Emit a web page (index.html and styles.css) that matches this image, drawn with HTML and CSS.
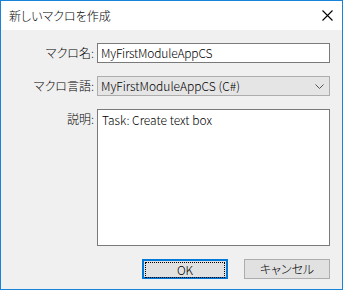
FILE: index.html
```html
<!DOCTYPE html>
<html lang="ja">
<head>
    <meta charset="UTF-8">
    <title>新しいマクロを作成</title>
    <link rel="stylesheet" href="styles.css">
</head>
<body>
    <div class="dialog">
        <div class="titlebar">
            <span class="title">新しいマクロを作成</span>
            <svg class="close" width="11" height="11" viewBox="0 0 11 11">
                <path d="M0.5 0.5 L10.5 10.5 M10.5 0.5 L0.5 10.5" stroke="#000" stroke-width="1.1" fill="none"/>
            </svg>
        </div>

        <div class="content">
            <div class="form">
                <label class="label mid">マクロ名:</label>
                <div class="textbox">MyFirstModuleAppCS</div>

                <label class="label mid">マクロ言語:</label>
                <div class="combo">
                    <span>MyFirstModuleAppCS (C#)</span>
                    <svg class="chevron" width="9" height="5" viewBox="0 0 9 5">
                        <path d="M0.5 0.5 L4.5 4.5 L8.5 0.5" stroke="#555" stroke-width="1" fill="none"/>
                    </svg>
                </div>

                <label class="label top">説明:</label>
                <div class="memo">Task: Create text box</div>
            </div>

            <div class="buttons">
                <button class="btn default"><span class="focus">OK</span></button>
                <button class="btn">キャンセル</button>
            </div>
        </div>
    </div>
</body>
</html>
```

FILE: styles.css
```css
body {
    margin: 0;
    font-family: "Noto Sans CJK JP", "Noto Sans", sans-serif;
    font-size: 12px;
    font-weight: 300;
    font-feature-settings: "palt";
    color: #000;
}

.dialog {
    width: 343px;
    height: 290px;
    box-sizing: border-box;
    border: 1px solid #1883d7;
    background: #f0f0f0;
    display: flex;
    flex-direction: column;
}

.titlebar {
    height: 29px;
    background: #fff;
    display: flex;
    align-items: center;
    justify-content: space-between;
    padding: 0 9px 0 8px;
}

.title {
    font-size: 12px;
}

.content {
    padding: 13px 12px 0 0;
}

.form {
    display: grid;
    grid-template-columns: 93px 233px;
    column-gap: 3px;
    row-gap: 13px;
}

.label {
    text-align: right;
    white-space: nowrap;
    line-height: 16px;
}

.label.mid {
    align-self: center;
}

.label.top {
    padding-top: 2px;
}

.textbox {
    height: 20px;
    box-sizing: border-box;
    border: 1px solid #7a7a7a;
    background: #fff;
    padding: 0 3px;
    line-height: 18px;
    letter-spacing: -0.2px;
}

.combo {
    height: 20px;
    box-sizing: border-box;
    border: 1px solid #adadad;
    background: #e5e5e5;
    padding: 0 4px 0 3px;
    line-height: 18px;
    display: flex;
    align-items: center;
    justify-content: space-between;
}

.chevron {
    margin-right: 1px;
}

.memo {
    height: 137px;
    box-sizing: border-box;
    border: 1px solid #7a7a7a;
    background: #fff;
    padding: 2px 4px;
    line-height: 16px;
}

.buttons {
    display: flex;
    justify-content: flex-end;
    gap: 16px;
    margin-top: 13px;
}

.btn {
    width: 86px;
    height: 20px;
    box-sizing: border-box;
    border: 1px solid #adadad;
    background: #e1e1e1;
    font-family: inherit;
    font-size: 12px;
    font-weight: 300;
    font-feature-settings: "palt";
    color: #000;
    padding: 0;
    line-height: 16px;
}

.btn.default {
    border: 2px solid #0078d7;
    padding: 1px;
}

.focus {
    display: block;
    height: 14px;
    border: 1px dotted #000;
    line-height: 14px;
}
```
